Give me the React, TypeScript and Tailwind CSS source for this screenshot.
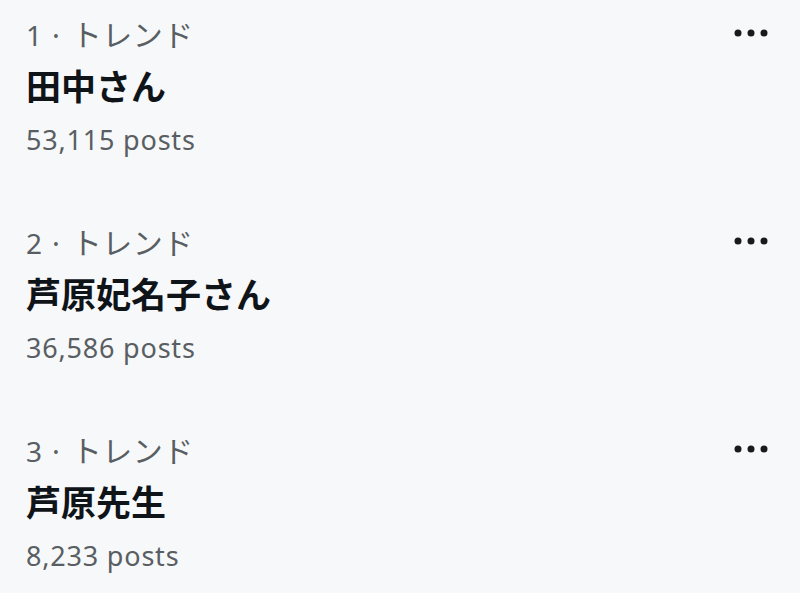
const trends = [
  { rank: 1, name: "田中さん", posts: "53,115" },
  { rank: 2, name: "芦原妃名子さん", posts: "36,586" },
  { rank: 3, name: "芦原先生", posts: "8,233" },
];

function MoreIcon() {
  return (
    <svg width="36" height="12" viewBox="0 0 36 12" className="text-[#1a1a1a]">
      <circle cx="4" cy="6" r="3.5" fill="currentColor" />
      <circle cx="17" cy="6" r="3.5" fill="currentColor" />
      <circle cx="30" cy="6" r="3.5" fill="currentColor" />
    </svg>
  );
}

export default function App() {
  return (
    <div
      className="w-[800px] h-[593px] bg-[#f7f8f9] overflow-hidden"
      style={{ fontFamily: '"Noto Sans", "Noto Sans CJK JP", sans-serif' }}
    >
      {trends.map((t) => (
        <div key={t.rank} className="flex justify-between pl-[26px] pr-[30px] pt-[9px] pb-[42px]">
          <div className="flex flex-col">
            <div className="text-[29px] leading-[52px] text-[#595e63]">
              <span className="text-[28px]">{t.rank}</span>
              <span className="ml-[10px] mr-[12px]">·</span>
              <span className="text-[30px] tracking-[0.5px]">トレンド</span>
            </div>
            <div className="text-[35px] leading-[52px] font-bold text-[#0f1419]">
              {t.name}
            </div>
            <div className="text-[27px] leading-[53px] tracking-[0.8px] text-[#595e63]">
              {t.posts} posts
            </div>
          </div>
          <div className="pt-[18px]">
            <MoreIcon />
          </div>
        </div>
      ))}
    </div>
  );
}
